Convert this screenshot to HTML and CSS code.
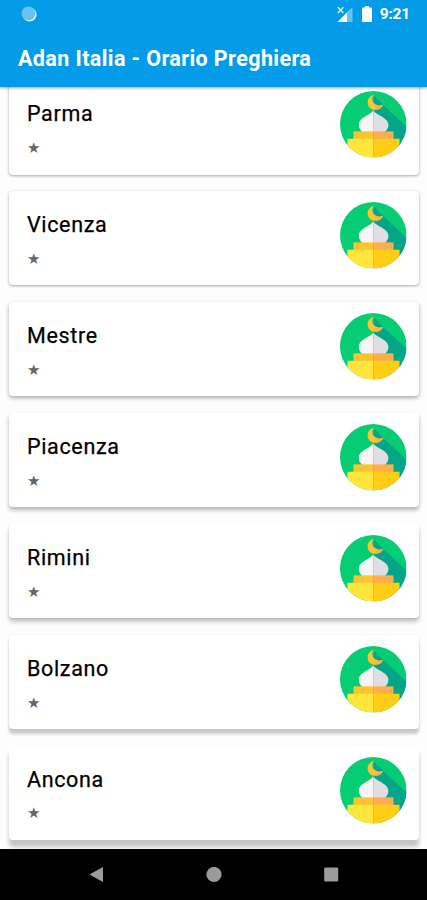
FILE: index.html
```html
<!DOCTYPE html>
<html lang="it">
<head>
    <meta charset="UTF-8">
    <meta name="viewport" content="width=device-width, initial-scale=1.0">
    <title>Adan Italia - Orario Preghiera</title>
    <link rel="stylesheet" href="styles.css">
</head>
<body>

    <!-- Icona moschea, usata in ogni card -->
    <svg class="defs" width="0" height="0">
        <clipPath id="cerchio"><circle cx="99" cy="99" r="99"/></clipPath>
        <symbol id="moschea" viewBox="-3 -3 204 204">
            <g clip-path="url(#cerchio)">
                <rect width="198" height="198" fill="#06cd74"/>
                <path d="M101 13L128 41L198 106V165H140L99 100V45Z" fill="#05a687"/>
                <path d="M101 11C89 15 82 23 82 34C83 48 93 56 105 56C116 56 125 50 129 41C113 47 97 38 96 25C96 19 98 15 101 11Z" fill="#fdc42f"/>
                <path d="M105 43C113 46 122 45 129 41C125 50 116 56 105 56Z" fill="#ffb347"/>
                <path d="M99 56C97 71 58 76 56 100C56 109 60 116 67 122H99Z" fill="#f5f5f6"/>
                <path d="M99 56C101 71 142 76 144 100C144 109 140 116 133 122H99Z" fill="#dfdfe3"/>
                <rect x="40" y="120" width="59" height="23" fill="#fdc42f"/>
                <rect x="99" y="120" width="60" height="23" fill="#ffad4f"/>
                <rect x="22" y="142" width="77" height="56" fill="#ffe53c"/>
                <rect x="99" y="142" width="78" height="56" fill="#ffcd16"/>
            </g>
        </symbol>
    </svg>

    <header class="app-bar">
        <div class="status-bar">
            <svg class="status-dot" width="16" height="16" viewBox="0 0 16 16">
                <circle cx="8.6" cy="8.6" r="7" fill="#d5f1fd"/>
                <circle cx="7.4" cy="7.4" r="6.9" fill="#68c3f1"/>
            </svg>
            <div class="status-icons">
                <svg width="16" height="17" viewBox="0 0 16 17">
                    <path d="M15.5 1V16H.5Z" fill="#68c3f1"/>
                    <path d="M10 6.5V16H.5Z" fill="#fff"/>
                    <path d="M.8 1.3L6.4 6.9M6.4 1.3L.8 6.9" stroke="#d9f1fd" stroke-width="1.4"/>
                </svg>
                <svg class="battery" width="10" height="16" viewBox="0 0 10 16">
                    <path d="M3 0H7V1.5H9Q10 1.5 10 2.5V15Q10 16 9 16H1Q0 16 0 15V2.5Q0 1.5 1 1.5H3Z" fill="#fff"/>
                </svg>
                <span class="clock">9:21</span>
            </div>
        </div>
        <h1>Adan Italia - Orario Preghiera</h1>
    </header>

    <main class="list">
        <div class="card">
            <div><h2>Parma</h2><p>★</p></div>
            <svg class="icon"><use href="#moschea"/></svg>
        </div>
        <div class="card">
            <div><h2>Vicenza</h2><p>★</p></div>
            <svg class="icon"><use href="#moschea"/></svg>
        </div>
        <div class="card">
            <div><h2>Mestre</h2><p>★</p></div>
            <svg class="icon"><use href="#moschea"/></svg>
        </div>
        <div class="card">
            <div><h2>Piacenza</h2><p>★</p></div>
            <svg class="icon"><use href="#moschea"/></svg>
        </div>
        <div class="card">
            <div><h2>Rimini</h2><p>★</p></div>
            <svg class="icon"><use href="#moschea"/></svg>
        </div>
        <div class="card">
            <div><h2>Bolzano</h2><p>★</p></div>
            <svg class="icon"><use href="#moschea"/></svg>
        </div>
        <div class="card">
            <div><h2>Ancona</h2><p>★</p></div>
            <svg class="icon"><use href="#moschea"/></svg>
        </div>
    </main>

    <nav class="nav-bar">
        <svg width="16" height="16" viewBox="0 0 16 16"><path d="M1.5 7.5L15 0V15Z"/></svg>
        <svg width="16" height="16" viewBox="0 0 16 16"><circle cx="8" cy="7.5" r="7.6"/></svg>
        <svg width="16" height="16" viewBox="0 0 16 16"><rect x="1.2" y=".5" width="14" height="14" rx="1"/></svg>
    </nav>

</body>
</html>
```
FILE: styles.css
```css
* {
    box-sizing: border-box;
}

body {
    margin: 0;
    height: 900px;
    display: flex;
    flex-direction: column;
    overflow: hidden;
    background-color: #fdfdfd;
    font-family: Roboto, "Liberation Sans", sans-serif;
}

h1, h2, p {
    margin: 0;
}

.defs {
    position: absolute;
}

/* Barra superiore */
.app-bar {
    flex: none;
    height: 87px;
    background-color: #049ce8;
    color: #fff;
    box-shadow: 0 1px 3px rgba(0, 0, 0, 0.35);
    z-index: 1;
}

.status-bar {
    display: flex;
    justify-content: space-between;
    align-items: center;
    height: 28px;
    padding: 0 17px 0 21px;
}

.status-icons {
    display: flex;
    align-items: center;
}

.battery {
    margin: 0 8px 0 9px;
}

.clock {
    font-size: 15.5px;
    font-weight: 700;
    line-height: 28px;
    letter-spacing: -0.2px;
}

.app-bar h1 {
    padding: 16px 18px 0;
    font-size: 21.5px;
    font-weight: 700;
    line-height: 30px;
    letter-spacing: 0.4px;
    white-space: nowrap;
}

/* Elenco delle città */
.list {
    flex: 1;
    min-height: 0;
    overflow: hidden;
    padding: 0 8px 0 9px;
}

.card {
    display: flex;
    justify-content: space-between;
    align-items: flex-start;
    height: 94px;
    margin-bottom: 16.9px;
    padding: 9.7px 11px 0 18px;
    background-color: #fff;
    border-radius: 4px;
    box-shadow: 0 1px 3px rgba(0, 0, 0, 0.35);
}

.card:first-child {
    margin-top: -6.5px;
}

/* L'ombra si allunga verso il fondo dello schermo */
.card:nth-child(n+3) {
    box-shadow: 0 2px 4px rgba(0, 0, 0, 0.33);
}

.card:nth-child(n+4) {
    box-shadow: 0 3px 4px rgba(0, 0, 0, 0.3);
}

.card:nth-child(n+5) {
    box-shadow: 0 1px 2px rgba(0, 0, 0, 0.1), 0 4px 4px rgba(0, 0, 0, 0.22);
}

.card:nth-child(n+6) {
    box-shadow: 0 0 2px rgba(0, 0, 0, 0.1), 0 5px 3px rgba(0, 0, 0, 0.2);
}

.card:nth-child(n+7) {
    box-shadow: 0 7px 4px rgba(0, 0, 0, 0.22);
}

.card h2 {
    padding-top: 9.3px;
    color: #000;
    font-size: 21.5px;
    font-weight: 400;
    line-height: 30px;
    letter-spacing: 0.65px;
    -webkit-text-stroke: 0.25px #000;
}

.card p {
    margin-top: 8.6px;
    color: #666;
    font-family: "DejaVu Sans", sans-serif;
    font-size: 15px;
    line-height: 20px;
}

.icon {
    width: 68.6px;
    height: 68.6px;
}

/* Pulsanti di navigazione */
.nav-bar {
    flex: none;
    display: flex;
    justify-content: space-between;
    align-items: center;
    height: 51px;
    padding: 0 88px;
    background-color: #000;
    fill: #9b9b9b;
    z-index: 1;
}
```
